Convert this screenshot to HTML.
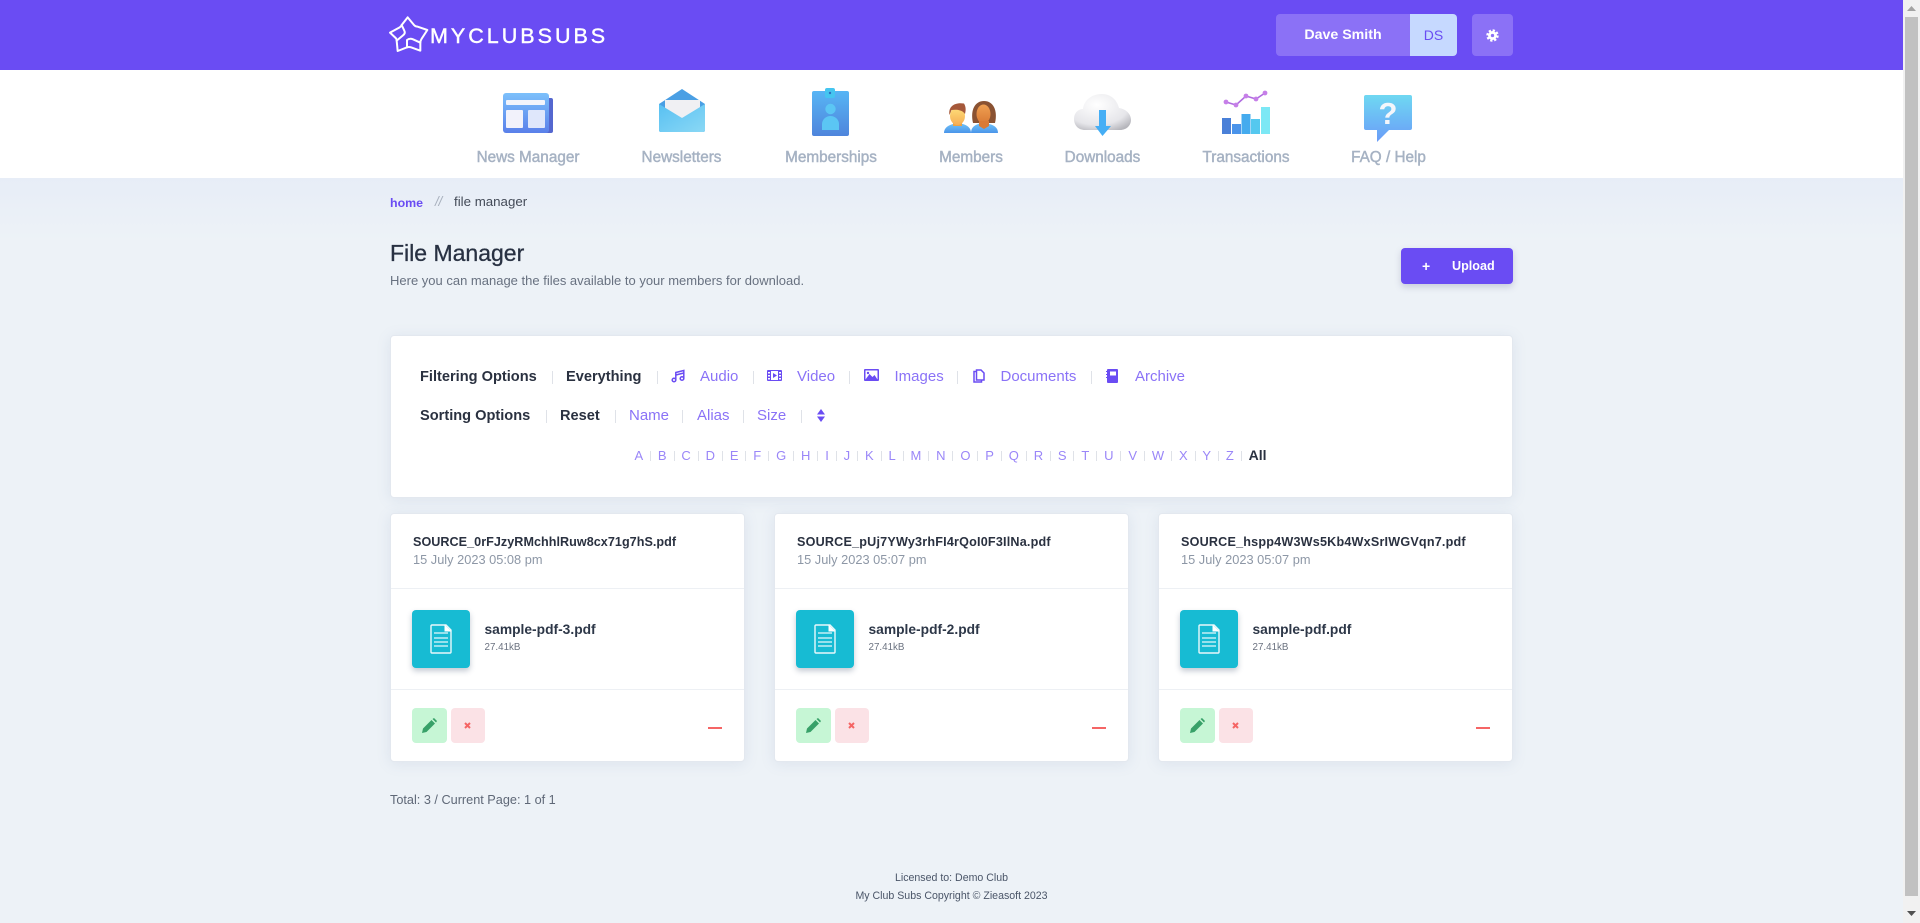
<!DOCTYPE html>
<html lang="en"><head><meta charset="utf-8"><title>File Manager</title>
<style>
html,body{margin:0;padding:0;width:1920px;height:923px;overflow:hidden;background:#edf2f7;font-family:"Liberation Sans",sans-serif}
.a{position:absolute}
.t{position:absolute;white-space:nowrap;line-height:20px;height:20px}
.hdr{left:0;top:0;width:1903px;height:70px;background:#6a4cf3}
.nav{left:0;top:70px;width:1903px;height:108px;background:#fff}
.grad{left:0;top:178px;width:1903px;height:64px;background:linear-gradient(#e7edf7,#edf2f7)}
.nl{top:148px;font-size:15.3px;color:#a6b2c3;-webkit-text-stroke:.45px #a6b2c3;transform:translateX(-50%)}
.card{background:#fff;border:1px solid #e3e8ef;border-radius:4px;box-sizing:border-box;box-shadow:0 2px 14px rgba(110,130,170,.13)}
.b{font-weight:700;font-size:14.6px;color:#2a3140}
.l{font-size:15px;font-weight:400;color:#8a72f7}
.sp{position:absolute;width:1px;height:13px;background:#dfe2e8}
.az{left:389.5px;top:445px;width:1122px;text-align:center;position:absolute;font-size:13px;line-height:20px;color:#9a86f8}
.az i{display:inline-block;width:1px;height:10px;background:#dfe2e8;margin:0 6.92px;vertical-align:-1px}
.az b{color:#2a3140;font-size:14px}
.fc{position:absolute;top:513px;width:355px;height:249px}
.fc .h1{left:22px;top:18px;font-size:12.6px;font-weight:700;color:#2a3140}
.fc .dt{left:22px;top:36px;font-size:12.8px;color:#8d97a6}
.fc .d1{position:absolute;left:0;width:353px;height:1px;background:#edf0f4}
.fc .tile{position:absolute;left:21px;top:96px;width:58px;height:58px;background:#17bbd3;border-radius:4px;box-shadow:0 3px 6px rgba(60,80,110,.3)}
.fc .nm{left:93.5px;top:106px;font-size:13.8px;font-weight:700;color:#2d3748}
.fc .sz{left:93.5px;top:124px;font-size:9.8px;color:#6b7280}
.fc .ed{position:absolute;left:21px;top:194px;width:35px;height:35px;border-radius:4px;background:#c6f6d5}
.fc .dl{position:absolute;left:60px;top:194px;width:34px;height:35px;border-radius:4px;background:#fbe2e6}
.fc .mn{position:absolute;left:317px;top:213px;width:14px;height:2px;background:#f56565}
.ft{left:0;width:1903px;text-align:center;font-size:10.6px;color:#4a5568}
</style></head><body>
<svg width="0" height="0" style="position:absolute"><defs>
<linearGradient id="g1" x1="0" y1="0" x2="0" y2="1"><stop offset="0" stop-color="#7cc0fb"/><stop offset="1" stop-color="#5a80ea"/></linearGradient>
<linearGradient id="g2" x1="0" y1="0" x2="1" y2="1"><stop offset="0" stop-color="#58c0f2"/><stop offset="1" stop-color="#8ad8f5"/></linearGradient>
<linearGradient id="g3" x1="0" y1="0" x2="0" y2="1"><stop offset="0" stop-color="#57b5f5"/><stop offset="1" stop-color="#4f85dc"/></linearGradient>
<linearGradient id="g4" x1="0" y1="0" x2="0" y2="1"><stop offset="0" stop-color="#6fd8f2"/><stop offset="1" stop-color="#6a9cf8"/></linearGradient>
<radialGradient id="g5" cx=".4" cy=".3" r=".8"><stop offset="0" stop-color="#fff"/><stop offset=".7" stop-color="#e6e6ea"/><stop offset="1" stop-color="#b5b5bb"/></radialGradient>
<linearGradient id="g6" x1="0" y1="0" x2="0" y2="1"><stop offset="0" stop-color="#ffe07a"/><stop offset="1" stop-color="#f5ad55"/></linearGradient>
<linearGradient id="g7" x1="0" y1="0" x2="0" y2="1"><stop offset="0" stop-color="#f0a052"/><stop offset="1" stop-color="#d97a35"/></linearGradient>
<linearGradient id="g8" x1="0" y1="0" x2="0" y2="1"><stop offset="0" stop-color="#72c4f8"/><stop offset="1" stop-color="#4a95ea"/></linearGradient>
</defs></svg>

<div class="a hdr"></div>
<svg class="a" style="left:385px;top:10px" width="130" height="50" viewBox="0 0 390 150" fill="none" stroke="#fff" stroke-width="6" stroke-linejoin="round" stroke-linecap="round">
<path d="M68 22L88 46Q92 50 98 50L127 60L110 86Q106 92 106 98L106 122L78 112Q72 110 66 112L38 123L35 92Q35 86 30 82L15 68L44 52Q48 50 50 45Z"/>
<path d="M50 45L58 62Q62 70 54 76L35 92M106 98L84 88Q74 84 66 90L66 112"/>
</svg>
<div class="t" style="left:430px;top:25px;height:22px;line-height:22px;font-size:21.5px;color:#fff;letter-spacing:3px;-webkit-text-stroke:.4px #fff">MYCLUBSUBS</div>
<div class="a" style="left:1276px;top:14px;width:134px;height:42px;background:#8b71f6;border-radius:4px 0 0 4px"></div>
<div class="t" style="left:1276px;width:134px;top:25px;text-align:center;font-size:14.2px;font-weight:700;color:#fff">Dave Smith</div>
<div class="a" style="left:1410px;top:14px;width:47px;height:42px;background:#c6d9ff;border-radius:0 4px 4px 0"></div>
<div class="t" style="left:1410px;width:47px;top:25px;text-align:center;font-size:14px;color:#6a4cf3">DS</div>
<div class="a" style="left:1472px;top:14px;width:41px;height:42px;background:#8b71f6;border-radius:4px"></div>
<svg class="a" style="left:1486px;top:29px" width="13" height="13" viewBox="0 0 14 14"><circle cx="7" cy="7" r="5.4" fill="none" stroke="#fff" stroke-width="2.6" stroke-dasharray="2.4 1.84"/><circle cx="7" cy="7" r="4.8" fill="#fff"/><circle cx="7" cy="7" r="1.8" fill="#8b71f6"/></svg>

<div class="a nav"></div>
<!-- nav icons -->
<svg class="a" style="left:503px;top:93px" width="50" height="41" viewBox="0 0 50 41">
<rect x="6" y="5" width="44" height="35" rx="2" fill="#5467cf"/><rect x="0" y="0" width="46" height="40" rx="3" fill="url(#g1)"/>
<rect x="3" y="7" width="39" height="5" rx="1" fill="#f3f4fb"/><rect x="3" y="17" width="17" height="18" rx="1" fill="#f2f2fb"/><rect x="25" y="17" width="17" height="18" rx="1" fill="#dfe7fb"/></svg>
<svg class="a" style="left:659px;top:89px" width="46" height="43" viewBox="0 0 46 43">
<path d="M0 15L23 0L46 15V41a2 2 0 0 1-2 2H2a2 2 0 0 1-2-2Z" fill="#4a9fe4"/><path d="M6 11H41V26L23 29L6 26Z" fill="#f0f0f3"/>
<path d="M0 15L23 29L46 15V41a2 2 0 0 1-2 2H2a2 2 0 0 1-2-2Z" fill="url(#g2)"/></svg>
<svg class="a" style="left:812px;top:88px" width="37" height="48" viewBox="0 0 37 48">
<rect x="0" y="3" width="37" height="45" rx="2" fill="url(#g3)"/><rect x="13" y="0" width="10" height="10" rx="2" fill="#45c5f0"/><circle cx="18" cy="5" r="1.2" fill="#2f6fc0"/>
<circle cx="18.500" cy="21" r="5.200" fill="#5bc6f4"/><path d="M10 42V36a8.500 8 0 0 1 17 0V42Z" fill="#5bc6f4"/></svg>
<svg class="a" style="left:944px;top:100px;overflow:visible" width="54" height="33" viewBox="0 0 54 33">
<path d="M0 33C0 26 8 24 13 23H15C20 24 27 26 27 33Z" fill="url(#g8)"/><rect x="9" y="19" width="9" height="7" fill="#e8a349"/><ellipse cx="13.500" cy="16" rx="7.500" ry="9" fill="url(#g6)"/><path d="M5.500 15C4 7 10 2 20 3.500C22 7 22 10 21 14C18 9.500 12 9.500 7.500 10Z" fill="#a5583a"/>
<path d="M27 33C27 26 33 24 38 23H41C47 24 54 26 54 33Z" fill="url(#g8)"/><path d="M29 23C26 10 31 1 40 1C49 1 54 10 51 23Z" fill="#8a5232"/><ellipse cx="39.500" cy="14" rx="7" ry="9.500" fill="url(#g7)"/><path d="M35 21H45V26L40 29L35 26Z" fill="#d97a35"/></svg>
<svg class="a" style="left:1074px;top:94px" width="57" height="42" viewBox="0 0 57 42">
<path d="M11 36C4 36 0 31 0 25C0 19 4 15 9 15C10 6 18 0 28 0C37 0 43 6 45 14C52 15 57 20 57 26C57 31 53 36 46 36Z" fill="url(#g5)"/>
<path d="M25 16H32V32H37L28.500 42L21 32H25Z" fill="#45aef5"/></svg>
<svg class="a" style="left:1222px;top:90px" width="48" height="44" viewBox="0 0 48 44">
<path d="M4 12L14 15L24 6L34 9L43 3" fill="none" stroke="#b06be0" stroke-width="1.6"/><g fill="#c67fe8"><circle cx="4" cy="12" r="2.400"/><circle cx="14" cy="15" r="2.400"/><circle cx="24" cy="6" r="2.400"/><circle cx="34" cy="9" r="2.400"/><circle cx="43" cy="3" r="2.400"/></g>
<rect x="0" y="28" width="9" height="16" fill="#4a80d8"/><rect x="10" y="34" width="9" height="10" fill="#4a93ea"/><rect x="19.500" y="24" width="9" height="20" fill="#45abee"/><rect x="29" y="29" width="9" height="15" fill="#55c8ef"/><rect x="39" y="17" width="9" height="27" fill="#7ce8f5"/></svg>
<svg class="a" style="left:1364px;top:95px" width="48" height="47" viewBox="0 0 48 47">
<path d="M2 0H46a2 2 0 0 1 2 2V33a2 2 0 0 1-2 2H25L13 47V35H2a2 2 0 0 1-2-2V2a2 2 0 0 1 2-2Z" fill="url(#g4)"/>
<text x="24" y="29" font-family="Liberation Sans" font-size="31" font-weight="700" fill="#f4f6fb" text-anchor="middle">?</text></svg>

<div class="t nl" style="left:528px">News Manager</div>
<div class="t nl" style="left:681.500px">Newsletters</div>
<div class="t nl" style="left:831px">Memberships</div>
<div class="t nl" style="left:971px">Members</div>
<div class="t nl" style="left:1102.500px">Downloads</div>
<div class="t nl" style="left:1246px">Transactions</div>
<div class="t nl" style="left:1388.500px">FAQ / Help</div>

<div class="a grad"></div>
<div class="t" style="left:390px;top:193px;font-size:12.4px;font-weight:700;color:#6a4cf3">home</div>
<div class="t" style="left:435px;top:192px;font-size:13.5px;font-style:italic;color:#a8b0bd;letter-spacing:-.3px">//</div>
<div class="t" style="left:454px;top:192px;font-size:13.3px;color:#444b58">file manager</div>
<div class="t" style="left:390px;top:243px;font-size:23px;color:#283142;-webkit-text-stroke:.3px #283142">File Manager</div>
<div class="t" style="left:390px;top:271px;font-size:13px;color:#687180">Here you can manage the files available to your members for download.</div>
<div class="a" style="left:1401px;top:248px;width:112px;height:36px;background:#6a4cf3;border-radius:4px;box-shadow:0 3px 7px rgba(90,90,140,.25)"></div>
<div class="t" style="left:1422px;top:256px;font-size:14px;font-weight:700;color:#fff">+</div>
<div class="t" style="left:1452px;top:256px;font-size:12.6px;font-weight:700;color:#fff">Upload</div>

<div class="a card" style="left:390px;top:335px;width:1123px;height:163px"></div>
<div class="t b" style="left:420px;top:367px">Filtering Options</div><div class="sp" style="left:552px;top:371px"></div>
<div class="t b" style="left:566px;top:367px">Everything</div><div class="sp" style="left:657px;top:371px"></div>
<svg class="a" style="left:671px;top:369px" width="14" height="14" viewBox="0 0 14 14" fill="none" stroke="#6a4cf3" stroke-width="1.5"><circle cx="3" cy="11" r="1.800"/><circle cx="11" cy="9.500" r="1.800"/><path d="M4.800 11V3.500L12.800 1.500V9.500M4.800 6L12.800 4"/></svg>
<div class="t l" style="left:700px;top:367px">Audio</div><div class="sp" style="left:753px;top:371px"></div>
<svg class="a" style="left:767px;top:370px" width="15" height="11" viewBox="0 0 15 11"><rect width="15" height="11" rx="1" fill="#6a4cf3"/><rect x="4" y="1" width="7" height="9" fill="#fff"/><path d="M6 3L10 5.500L6 8Z" fill="#6a4cf3"/><g fill="#fff"><rect x="1" y="2" width="2" height="1.500"/><rect x="1" y="5" width="2" height="1.500"/><rect x="1" y="8" width="2" height="1.500"/><rect x="12" y="2" width="2" height="1.500"/><rect x="12" y="5" width="2" height="1.500"/><rect x="12" y="8" width="2" height="1.500"/></g></svg>
<div class="t l" style="left:797px;top:367px">Video</div><div class="sp" style="left:849px;top:371px"></div>
<svg class="a" style="left:864px;top:369px" width="15" height="12" viewBox="0 0 15 12"><rect width="15" height="12" rx="1" fill="#6a4cf3"/><rect x="1.500" y="1.500" width="12" height="9" fill="#fff"/><path d="M1.500 10.500L5.500 5L8.500 8L10.500 6L13.500 10.500Z" fill="#6a4cf3"/><circle cx="4" cy="4" r="1.200" fill="#6a4cf3"/></svg>
<div class="t l" style="left:894.500px;top:367px">Images</div><div class="sp" style="left:957px;top:371px"></div>
<svg class="a" style="left:973px;top:369px" width="12" height="14" viewBox="0 0 12 14" fill="none" stroke="#6a4cf3" stroke-width="1.500"><path d="M3.500 2.500H1V13H8.500V11"/><path d="M3.500 1H8L11 4V11H3.500Z"/></svg>
<div class="t l" style="left:1000.500px;top:367px">Documents</div><div class="sp" style="left:1091px;top:371px"></div>
<svg class="a" style="left:1106px;top:369px" width="12" height="14" viewBox="0 0 12 14"><rect x="1" y="0" width="11" height="14" rx="1" fill="#6a4cf3"/><rect x="4" y="2.500" width="6" height="4" fill="#fff"/><g fill="#6a4cf3"><rect x="0" y="2" width="2" height="1"/><rect x="0" y="5" width="2" height="1"/><rect x="0" y="8" width="2" height="1"/></g></svg>
<div class="t l" style="left:1135px;top:367px">Archive</div>

<div class="t b" style="left:420px;top:406px">Sorting Options</div><div class="sp" style="left:546px;top:410px"></div>
<div class="t b" style="left:560px;top:406px">Reset</div><div class="sp" style="left:615px;top:410px"></div>
<div class="t l" style="left:629px;top:406px">Name</div><div class="sp" style="left:682px;top:410px"></div>
<div class="t l" style="left:697px;top:406px">Alias</div><div class="sp" style="left:743px;top:410px"></div>
<div class="t l" style="left:757px;top:406px">Size</div><div class="sp" style="left:801px;top:410px"></div>
<svg class="a" style="left:817px;top:409px" width="8" height="13" viewBox="0 0 8 13" fill="#6a4cf3"><path d="M4 0L8 5.500H0Z"/><path d="M0 7.500H8L4 13Z"/></svg>

<div class="az">A<i></i>B<i></i>C<i></i>D<i></i>E<i></i>F<i></i>G<i></i>H<i></i>I<i></i>J<i></i>K<i></i>L<i></i>M<i></i>N<i></i>O<i></i>P<i></i>Q<i></i>R<i></i>S<i></i>T<i></i>U<i></i>V<i></i>W<i></i>X<i></i>Y<i></i>Z<i></i><b>All</b></div>

<div class="card fc" style="left:390px">
<div class="t h1" style="letter-spacing:.04px">SOURCE_0rFJzyRMchhlRuw8cx71g7hS.pdf</div><div class="t dt">15 July 2023 05:08 pm</div><div class="d1" style="top:74px"></div>
<div class="tile"><svg class="a" style="left:18px;top:14px" width="22" height="30" viewBox="0 0 22 30" fill="none" stroke="#fff"><path d="M2 1H16L21 6V28a1 1 0 0 1-1 1H2a1 1 0 0 1-1-1V2a1 1 0 0 1 1-1Z" stroke-width="1.400" opacity=".9"/><path d="M15 1V7H21" fill="#fff" stroke-width="1"/><path d="M4 9H18M4 14H18M4 18H18M4 22H18" stroke-width="1.400" opacity=".75"/></svg></div>
<div class="t nm">sample-pdf-3.pdf</div><div class="t sz">27.41kB</div><div class="d1" style="top:175px"></div>
<div class="ed"><svg class="a" style="left:10px;top:10px" width="15" height="15" viewBox="0 0 15 15" fill="#38a169"><path d="M0 15L1 10.500L9.500 2L13 5.500L4.500 14Z"/><path d="M10.500 1L12 0L15 3L14 4.500Z"/></svg></div>
<div class="dl"><svg class="a" style="left:13px;top:14px" width="7" height="7" viewBox="0 0 7 7" stroke="#f56565" stroke-width="2"><path d="M1 1L6 6M6 1L1 6"/></svg></div>
<div class="mn"></div></div>

<div class="card fc" style="left:774px">
<div class="t h1" style="letter-spacing:.2px">SOURCE_pUj7YWy3rhFI4rQoI0F3IlNa.pdf</div><div class="t dt">15 July 2023 05:07 pm</div><div class="d1" style="top:74px"></div>
<div class="tile"><svg class="a" style="left:18px;top:14px" width="22" height="30" viewBox="0 0 22 30" fill="none" stroke="#fff"><path d="M2 1H16L21 6V28a1 1 0 0 1-1 1H2a1 1 0 0 1-1-1V2a1 1 0 0 1 1-1Z" stroke-width="1.400" opacity=".9"/><path d="M15 1V7H21" fill="#fff" stroke-width="1"/><path d="M4 9H18M4 14H18M4 18H18M4 22H18" stroke-width="1.400" opacity=".75"/></svg></div>
<div class="t nm">sample-pdf-2.pdf</div><div class="t sz">27.41kB</div><div class="d1" style="top:175px"></div>
<div class="ed"><svg class="a" style="left:10px;top:10px" width="15" height="15" viewBox="0 0 15 15" fill="#38a169"><path d="M0 15L1 10.500L9.500 2L13 5.500L4.500 14Z"/><path d="M10.500 1L12 0L15 3L14 4.500Z"/></svg></div>
<div class="dl"><svg class="a" style="left:13px;top:14px" width="7" height="7" viewBox="0 0 7 7" stroke="#f56565" stroke-width="2"><path d="M1 1L6 6M6 1L1 6"/></svg></div>
<div class="mn"></div></div>

<div class="card fc" style="left:1158px">
<div class="t h1" style="letter-spacing:.2px">SOURCE_hspp4W3Ws5Kb4WxSrIWGVqn7.pdf</div><div class="t dt">15 July 2023 05:07 pm</div><div class="d1" style="top:74px"></div>
<div class="tile"><svg class="a" style="left:18px;top:14px" width="22" height="30" viewBox="0 0 22 30" fill="none" stroke="#fff"><path d="M2 1H16L21 6V28a1 1 0 0 1-1 1H2a1 1 0 0 1-1-1V2a1 1 0 0 1 1-1Z" stroke-width="1.400" opacity=".9"/><path d="M15 1V7H21" fill="#fff" stroke-width="1"/><path d="M4 9H18M4 14H18M4 18H18M4 22H18" stroke-width="1.400" opacity=".75"/></svg></div>
<div class="t nm">sample-pdf.pdf</div><div class="t sz">27.41kB</div><div class="d1" style="top:175px"></div>
<div class="ed"><svg class="a" style="left:10px;top:10px" width="15" height="15" viewBox="0 0 15 15" fill="#38a169"><path d="M0 15L1 10.500L9.500 2L13 5.500L4.500 14Z"/><path d="M10.500 1L12 0L15 3L14 4.500Z"/></svg></div>
<div class="dl"><svg class="a" style="left:13px;top:14px" width="7" height="7" viewBox="0 0 7 7" stroke="#f56565" stroke-width="2"><path d="M1 1L6 6M6 1L1 6"/></svg></div>
<div class="mn"></div></div>

<div class="t" style="left:390px;top:790px;font-size:12.7px;color:#5f6877">Total: 3 / Current Page: 1 of 1</div>
<div class="t ft" style="top:868px">Licensed to: Demo Club</div>
<div class="t ft" style="top:886px">My Club Subs Copyright © Zieasoft 2023</div>

<div class="a" style="left:1903px;top:0;width:17px;height:923px;background:#f1f1f1"></div>
<div class="a" style="left:1905px;top:17px;width:13px;height:879px;background:#c1c1c1"></div>
<svg class="a" style="left:1907px;top:6px" width="9" height="5" viewBox="0 0 9 5" fill="#a3a3a3"><path d="M4.500 0L9 5H0Z"/></svg>
<svg class="a" style="left:1907px;top:911px" width="9" height="5" viewBox="0 0 9 5" fill="#505050"><path d="M0 0H9L4.500 5Z"/></svg>
</body></html>
